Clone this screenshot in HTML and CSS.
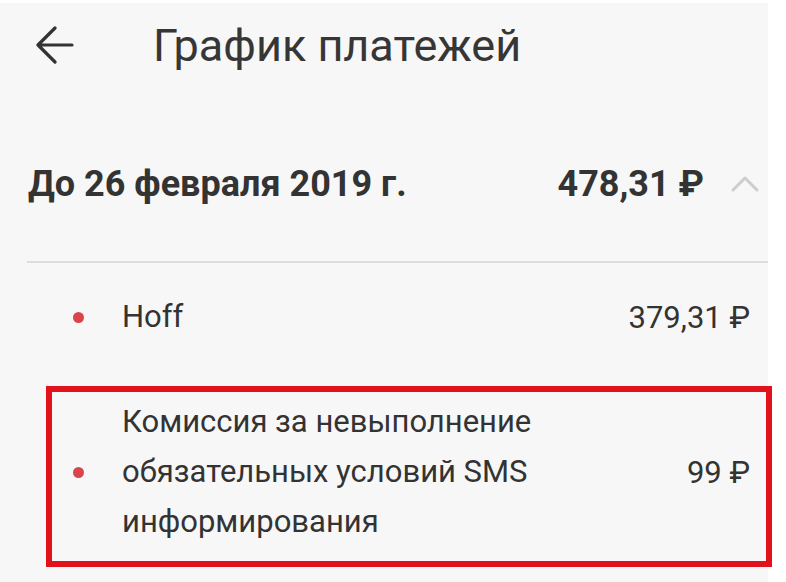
FILE: index.html
```html
<!DOCTYPE html>
<html lang="ru">
<head>
<meta charset="utf-8">
<title>График платежей</title>
<link rel="stylesheet" href="styles.css">
</head>
<body>
<div class="screen">
  <header class="header">
    <svg class="back" width="38" height="38" viewBox="0 0 38 38">
      <path d="M2 19 H36 M19 2 L2 19 L19 36" fill="none" stroke="#333" stroke-width="3.2" stroke-linecap="round" stroke-linejoin="round"/>
    </svg>
    <h1 class="title">График платежей</h1>
  </header>

  <section class="summary">
    <div class="summary-label">До 26 февраля 2019 г.</div>
    <div class="summary-amount">478,31 ₽</div>
    <svg class="chevron" width="30" height="18" viewBox="0 0 30 18">
      <path d="M3 15 L15 3 L27 15" fill="none" stroke="#cdcdcd" stroke-width="3" stroke-linecap="round" stroke-linejoin="round"/>
    </svg>
  </section>

  <div class="divider"></div>

  <div class="item">
    <span class="dot"></span>
    <span class="item-name">Hoff</span>
    <span class="item-amount">379,31 ₽</span>
  </div>

  <div class="item item-highlight">
    <span class="dot"></span>
    <span class="item-name item-multi">Комиссия за невыполнение обязательных условий SMS информирования</span>
    <span class="item-amount">99 ₽</span>
  </div>
</div>
</body>
</html>
```

FILE: styles.css
```css
html, body {
  margin: 0;
  padding: 0;
  background: #ffffff;
}

body {
  font-family: Roboto, "Noto Sans", "Liberation Sans", sans-serif;
  color: #333333;
}

.screen {
  width: 768px;
  height: 579px;
  margin-top: 3px;
  background: #f7f7f7;
  display: flex;
  flex-direction: column;
}

.header {
  display: flex;
  align-items: center;
  height: 84px;
  padding-left: 36px;
}

.back {
  display: block;
  flex: none;
}

.title {
  margin: 0 0 0 79px;
  font-size: 45px;
  font-weight: 400;
  color: #363636;
}

.summary {
  display: flex;
  align-items: center;
  height: 90px;
  margin-top: 52px;
  padding-left: 28px;
  padding-right: 8px;
}

.summary-label {
  flex: 1;
  font-size: 36px;
  font-weight: 700;
  color: #333;
}

.summary-amount {
  font-size: 36px;
  font-weight: 700;
  color: #333;
}

.chevron {
  display: block;
  flex: none;
  margin-left: 26px;
}

.divider {
  height: 2px;
  margin-top: 32px;
  margin-left: 27px;
  background: #dddddd;
}

.item {
  display: flex;
  align-items: center;
  height: 60px;
  margin-top: 24px;
  padding-left: 73px;
  padding-right: 18px;
}

.dot {
  flex: none;
  width: 11px;
  height: 11px;
  border-radius: 50%;
  background: #d9454b;
  margin-right: 38px;
}

.item-name {
  font-size: 31px;
  line-height: 50px;
  color: #333;
}

.item-amount {
  margin-left: auto;
  font-size: 31px;
  color: #333;
}

.item-highlight {
  flex: none;
  height: auto;
  margin-top: 39px;
  margin-left: 46px;
  width: 726px;
  box-sizing: border-box;
  border: 6px solid #e2121c;
  padding: 5px 16px 14px 21px;
}

.item-multi {
  max-width: 430px;
}
```
